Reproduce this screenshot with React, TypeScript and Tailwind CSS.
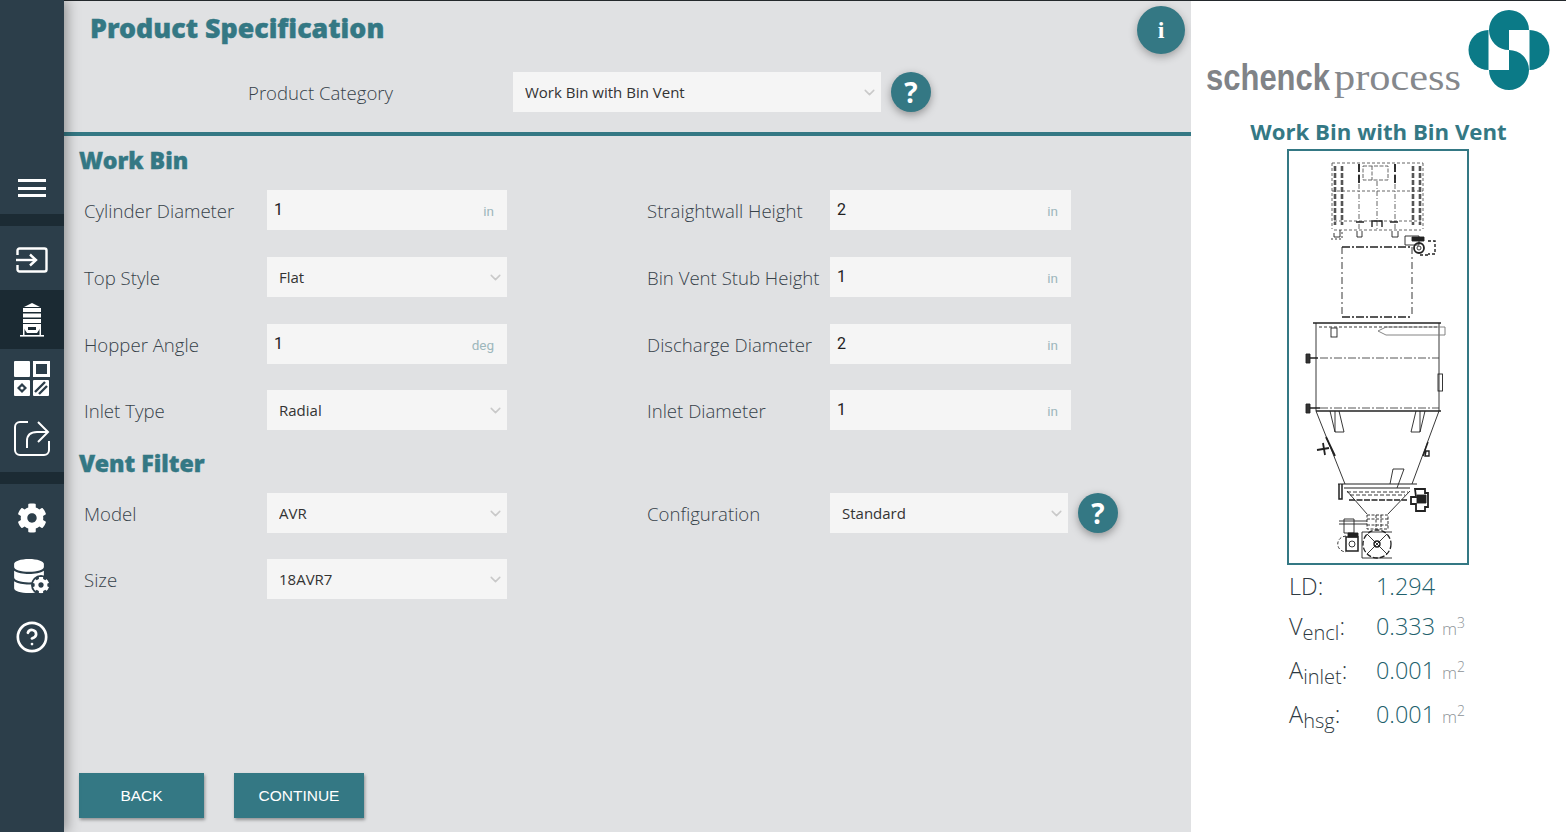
import { ChevronDown, CircleHelp } from "lucide-react";
import { FaCog, FaDatabase } from "react-icons/fa";

const sans = "font-['Open_Sans',sans-serif]";
const heavy = "font-['Noto_Sans',sans-serif] [-webkit-text-stroke:0.4px_#347884]";

function LoginIcon() {
  return (
    <svg width="32" height="26" viewBox="0 0 32 26" fill="none" stroke="white" strokeWidth="2.4">
      <path d="M1.5 8V3.5a2 2 0 0 1 2-2h25a2 2 0 0 1 2 2v19a2 2 0 0 1-2 2h-25a2 2 0 0 1-2-2V18" />
      <path d="M0 13h19" />
      <path d="M14 7.5l6 5.5-6 5.5" />
    </svg>
  );
}

function SiloIcon() {
  return (
    <svg width="24" height="34" viewBox="0 0 24 34" fill="white">
      <path d="M12 0l8 4H4z" />
      <rect x="3" y="5" width="18" height="4" />
      <rect x="3" y="10.5" width="18" height="4" />
      <rect x="3" y="16" width="18" height="4" />
      <path d="M3 21h18v3l-4 6H7l-4-6z" />
      <path d="M8 24h8v3H8z" fill="#1b2a33" />
      <rect x="3" y="21" width="1.5" height="12" />
      <rect x="19.5" y="21" width="1.5" height="12" />
      <rect x="0" y="32" width="24" height="1.6" />
    </svg>
  );
}

function ModulesIcon() {
  return (
    <svg width="36" height="36" viewBox="0 0 36 36">
      <rect x="0" y="0" width="16" height="16" rx="1" fill="white" />
      <rect x="20.5" y="1.5" width="14" height="13" fill="none" stroke="white" strokeWidth="3" />
      <rect x="0" y="19" width="16" height="16" rx="1" fill="white" />
      <path d="M8 22l5 5-5 5-5-5z" fill="#2c3e4a" />
      <circle cx="8" cy="27" r="1.6" fill="white" />
      <rect x="19" y="19" width="16" height="16" rx="1" fill="white" />
      <path d="M21 31l10-10M25 33l8-8" stroke="#2c3e4a" strokeWidth="2.4" />
    </svg>
  );
}

function ShareIcon() {
  return (
    <svg width="36" height="36" viewBox="0 0 36 36" fill="none" stroke="white" strokeWidth="2">
      <path d="M14 2H6a5 5 0 0 0-5 5v23a5 5 0 0 0 5 5h24a5 5 0 0 0 5-5v-9" />
      <path d="M13 28v-7c0-6 4-9 10-9h10" />
      <path d="M24 2l10 10-10 10" />
    </svg>
  );
}

function DataIcon() {
  return (
    <div className="relative h-[36px] w-[36px]">
      <FaDatabase className="-ml-[2px] text-white" size={34} />
      <FaCog className="absolute -right-[1px] bottom-0 rounded-full bg-[#2c3e4a] p-[1.5px] text-white" size={20} />
    </div>
  );
}

function Sidebar() {
  return (
    <aside className="relative z-10 flex w-[64px] shrink-0 flex-col items-center bg-[#2c3e4a] shadow-[3px_0_12px_rgba(0,0,0,0.35)]">
      <div className="flex h-[214px] w-full items-end justify-center pb-[17px]">
        <div className="flex w-[28px] flex-col gap-[4.5px]">
          <div className="h-[3px] bg-white" />
          <div className="h-[3px] bg-white" />
          <div className="h-[3px] bg-white" />
        </div>
      </div>
      <div className="h-[12px] w-full bg-[#1c2b34]" />
      <div className="flex h-[64px] w-full items-center justify-center pt-[4px]">
        <LoginIcon />
      </div>
      <div className="flex h-[59px] w-full items-center justify-center bg-[#1b2a33]">
        <SiloIcon />
      </div>
      <div className="flex h-[60px] w-full items-center justify-center">
        <ModulesIcon />
      </div>
      <div className="flex h-[63px] w-full items-center justify-center pb-[5px]">
        <ShareIcon />
      </div>
      <div className="h-[12px] w-full bg-[#1c2b34]" />
      <div className="flex h-[66px] w-full items-center justify-center pt-[1px]">
        <FaCog className="text-white" size={30} />
      </div>
      <div className="flex h-[54px] w-full items-center justify-center">
        <DataIcon />
      </div>
      <div className="flex h-[64px] w-full items-center justify-center pt-[2px]">
        <CircleHelp className="text-white" size={34} strokeWidth={1.9} />
      </div>
    </aside>
  );
}

function RoundButton({ label, large }: { label: string; large?: boolean }) {
  return (
    <button
      className={
        large
          ? "flex h-[48px] w-[48px] shrink-0 items-center justify-center rounded-full bg-[#347884] font-['Liberation_Serif',serif] text-[24px] font-bold text-white shadow-[0_3px_8px_rgba(0,0,0,0.3)]"
          : `flex h-[40px] w-[40px] shrink-0 items-center justify-center rounded-full bg-[#347884] ${sans} text-[28px] font-bold text-white shadow-[0_3px_8px_rgba(0,0,0,0.35)]`
      }
    >
      {label}
    </button>
  );
}

function Label({ text }: { text: string }) {
  return <label className={`${sans} pt-[1px] text-[18.6px] font-light leading-[40px] text-[#37424a]`}>{text}</label>;
}

function NumberField({ value, unit }: { value: string; unit: string }) {
  return (
    <div className="relative h-[40px] bg-[#f5f5f5]">
      <input
        defaultValue={value}
        className="h-[38px] w-full bg-transparent pl-[7px] font-['Roboto',sans-serif] text-[16px] text-[#222] outline-none"
      />
      <span className="absolute right-[13px] top-[11px] font-['Roboto',sans-serif] text-[13.5px] text-[#9db7bc]">{unit}</span>
    </div>
  );
}

function SelectField({ value, className }: { value: string; className?: string }) {
  return (
    <div className={`relative h-[40px] bg-[#f5f5f5] ${className ?? ""}`}>
      <select
        defaultValue={value}
        className={`h-full w-full appearance-none bg-transparent pl-[12px] pt-[1px] ${sans} text-[15px] text-[#333] outline-none`}
      >
        <option>{value}</option>
      </select>
      <ChevronDown className="absolute right-[3px] top-[12px] text-[#c9c9c9]" size={17} strokeWidth={2.2} />
    </div>
  );
}

function SectionTitle({ text, className }: { text: string; className: string }) {
  return <h2 className={`${heavy} pl-[15px] text-[23.2px] font-black leading-[32px] text-[#347884] ${className}`}>{text}</h2>;
}

function Specification() {
  return (
    <main className="flex w-[1127px] shrink-0 flex-col bg-[#e0e1e3]">
      <div className="flex h-[131px] flex-col">
        <div className="flex items-start justify-between pl-[26px] pr-[6px] pt-[5px]">
          <h1 className={`${heavy} pt-[4px] text-[26.8px] font-black leading-[36px] text-[#347884]`}>Product Specification</h1>
          <RoundButton label="i" large />
        </div>
        <div className="mt-[18px] flex items-start pl-[184px]">
          <div className="w-[265px] pt-[1px]">
            <Label text="Product Category" />
          </div>
          <SelectField value="Work Bin with Bin Vent" className="w-[368px]" />
          <div className="ml-[10px]">
            <RoundButton label="?" />
          </div>
        </div>
      </div>
      <div className="h-[4px] bg-[#347884]" />
      <SectionTitle text="Work Bin" className="mt-[8px]" />
      <div className="mt-[14px] grid grid-cols-[183px_240px_140px_183px_241px] grid-rows-[67px_67px_66px_40px] pl-[20px]">
        <Label text="Cylinder Diameter" />
        <NumberField value="1" unit="in" />
        <div />
        <Label text="Straightwall Height" />
        <NumberField value="2" unit="in" />

        <Label text="Top Style" />
        <SelectField value="Flat" />
        <div />
        <Label text="Bin Vent Stub Height" />
        <NumberField value="1" unit="in" />

        <Label text="Hopper Angle" />
        <NumberField value="1" unit="deg" />
        <div />
        <Label text="Discharge Diameter" />
        <NumberField value="2" unit="in" />

        <Label text="Inlet Type" />
        <SelectField value="Radial" />
        <div />
        <Label text="Inlet Diameter" />
        <NumberField value="1" unit="in" />
      </div>
      <SectionTitle text="Vent Filter" className="mt-[17px]" />
      <div className="mt-[14px] grid grid-cols-[183px_240px_140px_183px_288px] grid-rows-[66px_40px] pl-[20px]">
        <Label text="Model" />
        <SelectField value="AVR" />
        <div />
        <Label text="Configuration" />
        <div className="flex items-start gap-[10px]">
          <SelectField value="Standard" className="w-[238px]" />
          <RoundButton label="?" />
        </div>

        <Label text="Size" />
        <SelectField value="18AVR7" />
      </div>
      <div className="mt-auto flex gap-[30px] pb-[14px] pl-[15px]">
        <button className="h-[45px] w-[125px] bg-[#347884] pt-[1px] font-['Liberation_Sans',sans-serif] text-[15.5px] text-white shadow-[1px_2px_3px_rgba(0,0,0,0.35)]">BACK</button>
        <button className="h-[45px] w-[130px] bg-[#347884] pt-[1px] font-['Liberation_Sans',sans-serif] text-[15.5px] text-white shadow-[1px_2px_3px_rgba(0,0,0,0.35)]">CONTINUE</button>
      </div>
    </main>
  );
}

function Logo() {
  return (
    <svg width="375" height="106" viewBox="1191 1 375 106" className="block">
      <text>
        <tspan x="1206" y="90" textLength="124" lengthAdjust="spacingAndGlyphs" fontFamily="Liberation Sans" fontWeight="700" fontSize="37" fill="#808387">schenck</tspan>
        <tspan x="1334" y="90" textLength="127" lengthAdjust="spacingAndGlyphs" fontFamily="Liberation Serif" fontSize="38" fill="#85888c">process</tspan>
      </text>
      <g transform="translate(1469 10)" fill="#0b7a87">
        <path d="M20 20A20 20 0 0 1 60 20L40 20V40A20 20 0 0 1 20 20Z" />
        <path d="M60 60A20 20 0 0 1 20 60L40 60V40A20 20 0 0 1 60 60Z" />
        <path d="M19.5 20A20 20 0 0 0 19.5 60Z" />
        <path d="M60.5 20A20 20 0 0 1 60.5 60Z" />
      </g>
    </svg>
  );
}

function BinDrawing() {
  return (
    <svg viewBox="1289 152 178 412" className="h-full w-full blur-[0.3px]" fill="none" stroke="#222" strokeWidth="0.9">
      {/* vent filter on top */}
      <g stroke="#555">
        <path d="M1332 164H1423M1332 192H1423M1334 222H1421M1334 231H1421" strokeDasharray="3 2" />
        <path d="M1332 164V230M1423 164V230" strokeDasharray="3 2" />
        <path d="M1335 167V226M1342 167V226M1413 167V226M1420 167V226" strokeWidth="2.6" strokeDasharray="5 2" />
        <path d="M1359 165V232M1395 165V232M1377 182V232" strokeDasharray="5 2 1 2" />
        <path d="M1363 167H1388V181H1363ZM1372 167V181" strokeDasharray="4 1.5" />
      </g>
      <path d="M1359 165V185M1395 165V185" strokeWidth="1.8" strokeDasharray="8 3" />
      <path d="M1372 228V222H1382V228M1356 223H1364M1390 223H1398" strokeWidth="1.4" />
      <path d="M1334 234V238H1340V231M1357 232V238H1362V232M1392 232V238H1398V232" />
      <path d="M1331 240H1342V232" strokeDasharray="2 2" />
      {/* motor */}
      <path d="M1405 237H1419V246H1405Z" />
      <path d="M1412 238H1424V242H1412Z" fill="#222" />
      <circle cx="1419" cy="249" r="5" strokeWidth="1.8" />
      <circle cx="1419" cy="249" r="2" />
      <path d="M1428 242H1435V255H1428M1420 256H1430" strokeWidth="1.4" strokeDasharray="3 2" />
      {/* standpipe */}
      <path d="M1342 248H1412M1342 318H1412" strokeWidth="1.3" strokeDasharray="8 2 2 2" />
      <path d="M1342 248V318M1412 248V318" strokeDasharray="7 3 2 3" />
      {/* bin */}
      <path d="M1313 324H1441" strokeWidth="1.4" />
      <path d="M1316 324V412M1439 324V412" />
      <path d="M1319 328H1438" strokeDasharray="3 2" />
      <rect x="1331" y="329" width="6" height="9" />
      <path d="M1378 332L1386 328H1445V336H1386Z" stroke="#777" />
      <path d="M1320 359H1439M1320 409H1439" stroke="#444" strokeDasharray="8 2 2 2" />
      <path d="M1306 355h4v9h-4zM1306 405h4v9h-4z" fill="#333" />
      <path d="M1310 359h8M1310 409h10" strokeWidth="1.4" />
      <rect x="1438" y="375" width="4.5" height="17" />
      <path d="M1316 412H1441" strokeWidth="1.6" />
      {/* hopper */}
      <path d="M1316 412L1345 485M1439 412L1412 485" />
      <path d="M1330 412L1335 433H1344L1339 412M1335 412V433M1425 412L1420 433H1411L1416 412M1420 412V433" />
      <path d="M1326 438L1335 457M1317 451L1329 449M1323 444L1325 456" strokeWidth="1.8" />
      <path d="M1428 443L1423 457M1426 452H1429V457H1425Z" strokeWidth="1.4" />
      <path d="M1338 485H1417M1344 489H1410" strokeWidth="1.1" />
      <path d="M1339 485V500H1342V485" strokeWidth="1.5" />
      <path d="M1390 485L1393 470H1404L1397 489" />
      <path d="M1347 493H1408M1350 496H1405" strokeDasharray="4 2" />
      <path d="M1347 492L1367 515M1410 492L1388 515" />
      <path d="M1349 501H1407" strokeWidth="1.4" strokeDasharray="6 1.5" />
      <path d="M1415 490H1425V494H1428V508H1425V512H1416V505H1411V498H1416Z" strokeWidth="1.8" />
      <path d="M1417 496H1426V504H1417Z" fill="#222" />
      {/* feeder */}
      <path d="M1367 516H1388V530H1367ZM1376 516V530M1381 516V530M1367 520H1388M1367 526H1388" strokeDasharray="3 1.5" />
      <path d="M1339 522H1367M1339 525H1367M1344 520H1354V534H1344Z" />
      <circle cx="1377" cy="545" r="14" strokeDasharray="5 2" strokeWidth="1.3" />
      <circle cx="1377" cy="545" r="3" strokeWidth="1.4" />
      <path d="M1367 535L1387 555M1387 535L1367 555M1362 533H1392M1362 559H1392M1362 533V559" />
      <path d="M1346 538H1358V552H1346Z" strokeWidth="1.5" />
      <path d="M1348 534H1358V538H1348Z" fill="#222" />
      <path d="M1346 537C1335 538 1335 552 1346 553" strokeDasharray="3 2" />
      <circle cx="1352" cy="545" r="3" />
    </svg>
  );
}

function Metric({ name, sub, value, unit, power }: { name: string; sub?: string; value: string; unit?: string; power?: string }) {
  return (
    <>
      <div className="text-[23.5px] font-light text-[#2f3a42]">
        {name}
        {sub && <sub className="text-[20px]">{sub}</sub>}:
      </div>
      <div className="whitespace-nowrap text-[23.4px] font-light text-[#22606c]">
        {value}
        {unit && (
          <span className="ml-[7px] text-[17px] text-[#8d9398]">
            {unit}
            <sup className="text-[14px]">{power}</sup>
          </span>
        )}
      </div>
    </>
  );
}

function SummaryPanel() {
  return (
    <section className="flex flex-1 flex-col bg-white">
      <Logo />
      <h2 className={`${sans} mt-[10px] text-center text-[22.2px] font-bold leading-[30px] text-[#347884]`}>Work Bin with Bin Vent</h2>
      <div className="ml-[96px] mt-[2px] h-[416px] w-[182px] border-2 border-[#347884]">
        <BinDrawing />
      </div>
      <div className={`${sans} ml-[98px] mt-[4px] grid grid-cols-[87px_110px] grid-rows-[36px_44px_44px_44px] items-center`}>
        <Metric name="LD" value="1.294" />
        <Metric name="V" sub="encl" value="0.333" unit="m" power="3" />
        <Metric name="A" sub="inlet" value="0.001" unit="m" power="2" />
        <Metric name="A" sub="hsg" value="0.001" unit="m" power="2" />
      </div>
    </section>
  );
}

export default function App() {
  return (
    <div className="flex h-[832px] w-[1566px] overflow-hidden">
      <Sidebar />
      <div className="flex flex-1 flex-col">
        <div className="h-px bg-[#23282c]" />
        <div className="flex h-[831px]">
          <Specification />
          <SummaryPanel />
        </div>
      </div>
    </div>
  );
}
